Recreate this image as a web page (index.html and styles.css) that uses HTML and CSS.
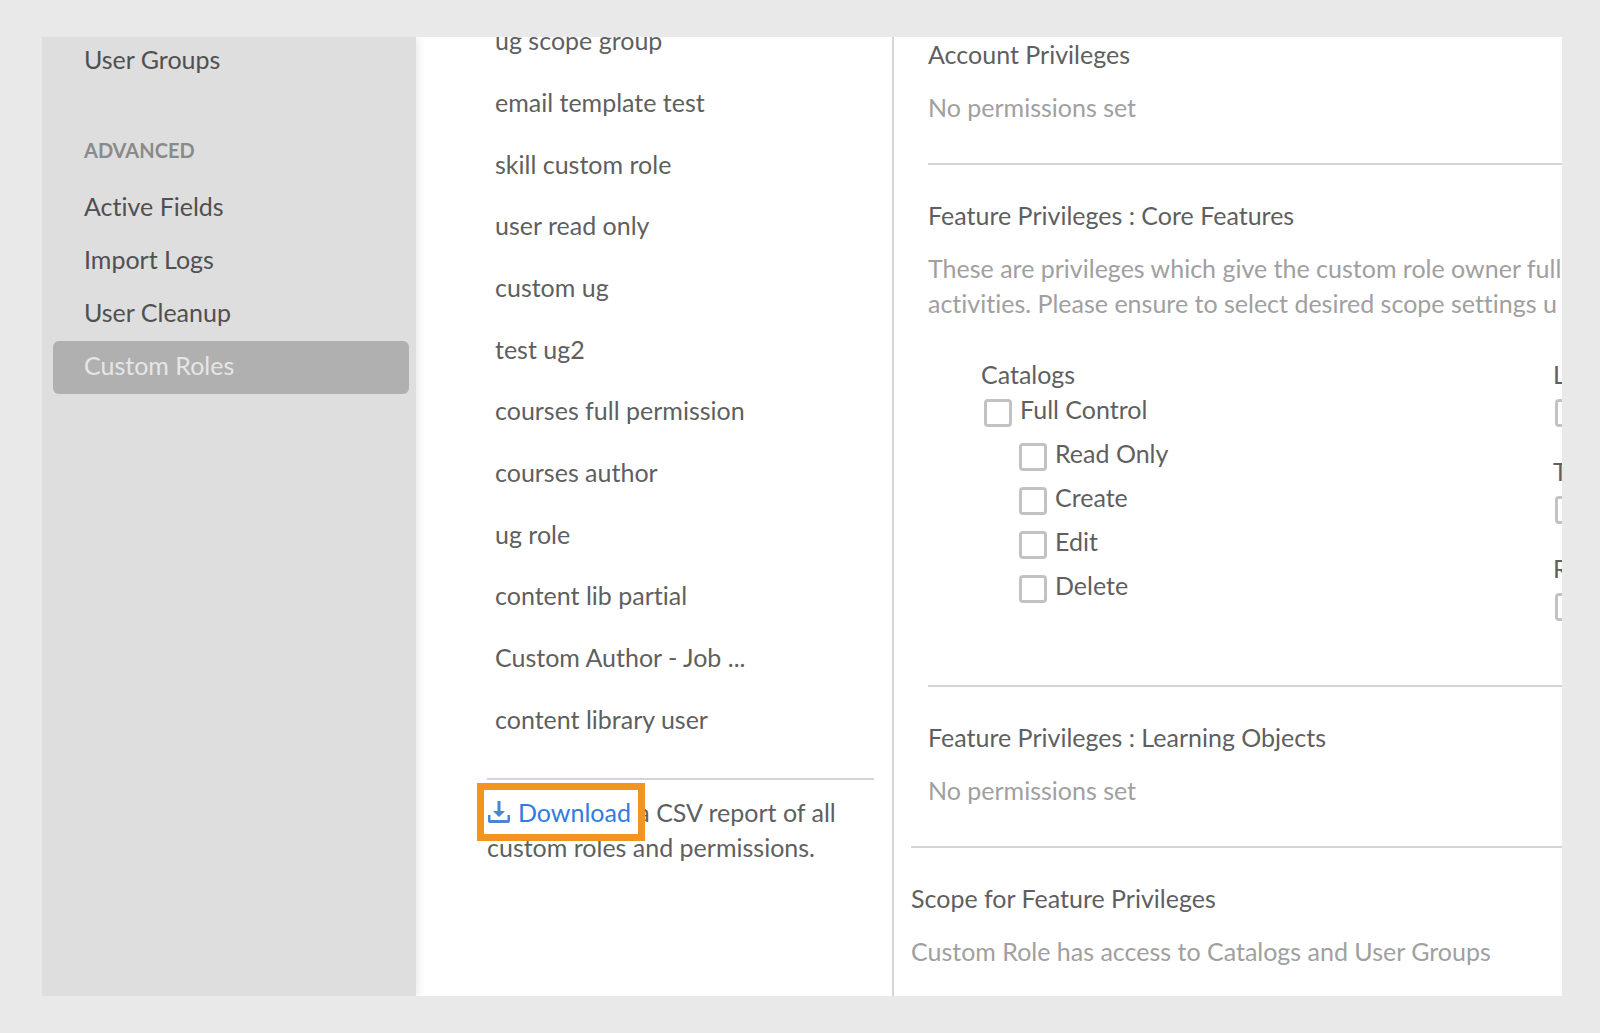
FILE: index.html
```html
<!DOCTYPE html>
<html lang="en">
<head>
<meta charset="utf-8">
<title>Custom Roles</title>
<link rel="stylesheet" href="styles.css">
</head>
<body>
<div class="frame">
  <nav class="sidebar">
    <a class="nav-item" href="#">User Groups</a>
    <h2 class="nav-heading">ADVANCED</h2>
    <a class="nav-item" href="#">Active Fields</a>
    <a class="nav-item" href="#">Import Logs</a>
    <a class="nav-item" href="#">User Cleanup</a>
    <a class="nav-item nav-item-active" href="#" aria-current="page">Custom Roles</a>
  </nav>

  <section class="roles">
    <ul class="role-list">
      <li>ug scope group</li>
      <li>email template test</li>
      <li>skill custom role</li>
      <li>user read only</li>
      <li>custom ug</li>
      <li>test ug2</li>
      <li>courses full permission</li>
      <li>courses author</li>
      <li>ug role</li>
      <li>content lib partial</li>
      <li>Custom Author - Job ...</li>
      <li>content library user</li>
    </ul>
    <p class="report"><a class="download" href="#"><svg class="download-icon" viewBox="0 0 22 22" aria-hidden="true"><path d="M9.500 0h3v10h4.500L11 16 5 10h4.500z"/><path d="M0 14h2.500v5h17v-5H22v6q0 2-2 2H2q-2 0-2-2z"/></svg>Download</a> a CSV report of all<br>custom roles and permissions.</p>
  </section>

  <main class="details">
    <section class="block">
      <h3>Account Privileges</h3>
      <p>No permissions set</p>
    </section>
    <section class="block block-core">
      <h3>Feature Privileges : Core Features</h3>
      <p>These are privileges which give the custom role owner full<br>activities. Please ensure to select desired scope settings u</p>
      <div class="privileges">
        <div class="privilege">
          <h4>Catalogs</h4>
          <label class="check"><input type="checkbox">Full Control</label>
          <label class="check check-sub"><input type="checkbox">Read Only</label>
          <label class="check check-sub"><input type="checkbox">Create</label>
          <label class="check check-sub"><input type="checkbox">Edit</label>
          <label class="check check-sub"><input type="checkbox">Delete</label>
        </div>
        <div class="privilege-stack">
          <div class="privilege"><h4><label for="p1">L</label></h4><div class="check"><input id="p1" type="checkbox"></div></div>
          <div class="privilege"><h4><label for="p2">T</label></h4><div class="check"><input id="p2" type="checkbox"></div></div>
          <div class="privilege"><h4><label for="p3">R</label></h4><div class="check"><input id="p3" type="checkbox"></div></div>
        </div>
      </div>
    </section>
    <section class="block block-last">
      <h3>Feature Privileges : Learning Objects</h3>
      <p>No permissions set</p>
    </section>
    <section class="scope">
      <h3>Scope for Feature Privileges</h3>
      <p>Custom Role has access to Catalogs and User Groups</p>
    </section>
  </main>
</div>
</body>
</html>
```
FILE: styles.css
```css
* {
  box-sizing: border-box;
}

body {
  margin: 0;
  padding: 37px 38px 37px 42px;
  background: #e9e9e9;
  color: #5f5f5f;
  font: 25px/35px Lato, "Liberation Sans", sans-serif;
  font-variant-ligatures: none;
}

h2, h3, h4, p, ul {
  margin: 0;
  padding: 0;
  font-size: inherit;
  font-weight: 400;
}

.frame {
  display: grid;
  grid-template-columns: 374px 478px minmax(0, 1fr);
  min-height: calc(100vh - 74px);
  overflow: hidden;
  background: #fff;
}

/* Sidebar */
.sidebar {
  padding: 0 7px 0 11px;
  background: #dedede;
  box-shadow: 2px 0 8px #00000018;
}

.nav-item {
  display: block;
  height: 53px;
  padding-left: 31px;
  border-radius: 6px;
  color: #505050;
  line-height: 49px;
  text-decoration: none;
}

.nav-item:first-child {
  margin-top: -2px;
}

.nav-item-active {
  background: #b0b0b0;
  color: #e6e6e6;
}

.nav-heading {
  padding: 45px 0 14px 31px;
  color: #8a8a8a;
  font-size: 20px;
  font-weight: 700;
}

/* Role list */
.roles {
  padding: 0 18px 0 71px;
  border-right: 2px solid #d5d5d5;
}

.role-list {
  display: grid;
  grid-auto-rows: 1fr;
  align-items: center;
  min-height: 740px;
  margin-top: -27px;
  padding-left: 8px;
  list-style: none;
}

.report {
  margin-top: 28px;
  padding-top: 15px;
  border-top: 2px solid #d5d5d5;
  white-space: nowrap;
}

.download {
  position: relative;
  color: #2f7de1;
  text-decoration: none;
}

.download::after {
  content: "";
  position: absolute;
  inset: -14px -14px -14px -10px;
  border: 7px solid #f29422;
}

.download-icon {
  width: 22px;
  height: 22px;
  margin: 0 8px 0 1px;
  vertical-align: -1px;
  fill: #4686d3;
}

/* Privileges */
.details {
  min-width: 0;
  padding-left: 17px;
  white-space: nowrap;
}

.block {
  margin-left: 17px;
  padding: 33px 0 38px;
  border-bottom: 2px solid #d5d5d5;
}

.block:first-child {
  padding-top: 0;
}

.block-core {
  padding-bottom: 64px;
}

.block-last {
  margin-left: 0;
  padding-left: 17px;
}

.scope {
  padding-top: 33px;
}

.details p {
  margin-top: 18px;
  color: #a0a0a0;
}

.privileges {
  display: grid;
  grid-template-columns: 572px max-content;
  margin: 36px 0 0 53px;
}

.privilege-stack {
  display: grid;
  align-content: start;
  gap: 27px;
}

.check {
  display: flex;
  gap: 8px;
  height: 35px;
  margin-bottom: 9px;
  padding-left: 3px;
}

.check:last-child {
  margin-bottom: 0;
}

.check-sub {
  padding-left: 38px;
}

.privilege-stack .check {
  padding-left: 2px;
}

.check input {
  appearance: none;
  flex: none;
  width: 28px;
  height: 28px;
  margin: 7px 0 0;
  border: 3px solid #c2c2c2;
  border-radius: 4px;
  background: #fff;
}
```
